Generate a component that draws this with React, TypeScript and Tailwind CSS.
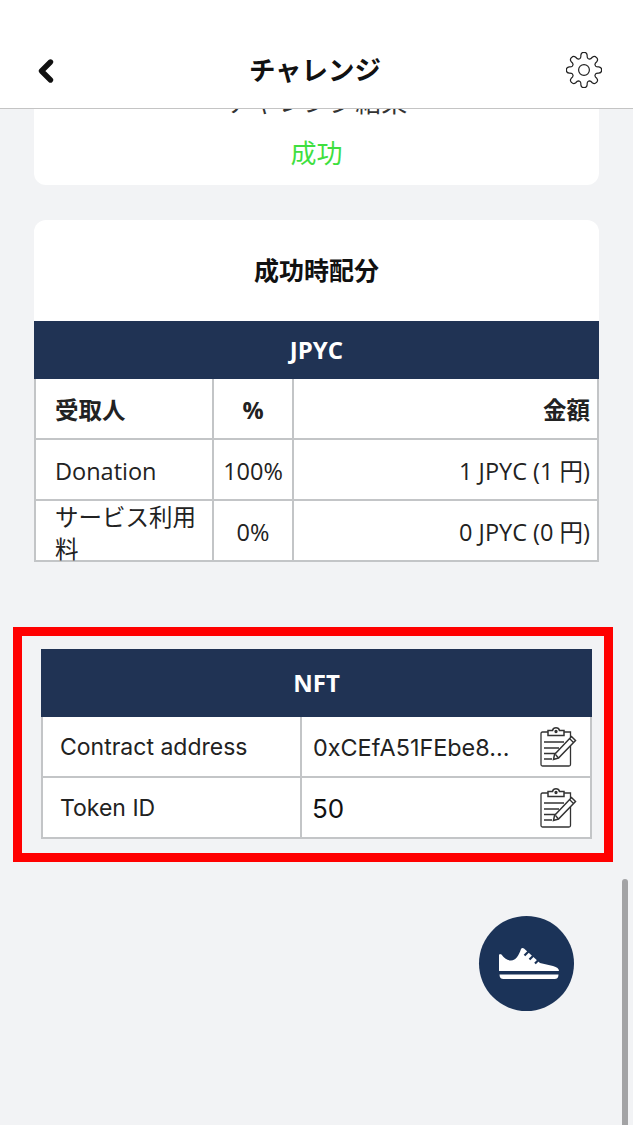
import { ChevronLeft } from 'lucide-react';
import type { JSX } from 'react';

const SANS = "font-['Open_Sans','Noto_Sans_CJK_JP',sans-serif]";

// 8-tooth cog outline, worked out once at render
function cogPath(): string {
  const pt = (r: number, deg: number): string => {
    const a = (deg * Math.PI) / 180;
    return `${(18 + r * Math.cos(a)).toFixed(2)} ${(18 + r * Math.sin(a)).toFixed(2)}`;
  };
  let d = '';
  for (let i = 0; i < 8; i++) {
    const c = i * 45 - 90;
    d += `${i === 0 ? 'M' : 'L'}${pt(12.2, c - 22.5 + 4)} `;
    d += `Q${pt(13, c - 13)} ${pt(15.2, c - 12)} `;
    d += `Q${pt(18, c - 9)} ${pt(17.6, c)} `;
    d += `Q${pt(18, c + 9)} ${pt(15.2, c + 12)} `;
    d += `Q${pt(13, c + 13)} ${pt(12.2, c + 22.5 - 4)} `;
  }
  return d + 'Z';
}

function Cog(): JSX.Element {
  return (
    <svg width="36" height="36" viewBox="0 0 36 36" fill="none" stroke="#222" strokeWidth="1.2" className="mb-[2px]">
      <path d={cogPath()} strokeLinejoin="round" />
      <circle cx="18" cy="18" r="5.4" />
    </svg>
  );
}

function ClipboardPen(): JSX.Element {
  return (
    <svg width="38" height="40" viewBox="0 0 38 40" fill="none" stroke="#333" strokeWidth="1.3" className="shrink-0">
      <path d="M9 5H3.5C2.5 5 2 5.6 2 6.5V37.5C2 38.5 2.5 39 3.5 39H30C31 39 31.5 38.5 31.5 37.5V19" />
      <path d="M25 5H31.5V10" />
      <path d="M9 8.5V3.5H13.5C14 1.5 15.5 0.8 17 0.8C18.5 0.8 20 1.5 20.5 3.5H25V8.5Z" strokeWidth="1.5" />
      <circle cx="17" cy="4.5" r="1" fill="#333" />
      <path d="M5 15H25M5 21H20M5 26.5H17M5 32H13" strokeWidth="1.5" />
      <path d="M15.5 27.5L32.5 9.5L36.5 13.5L19.5 31L14.5 32.5Z" strokeWidth="1.5" />
      <path d="M30.5 11.5L34.5 15.5M16.5 27.5L19.5 31" />
    </svg>
  );
}

function Shoe(): JSX.Element {
  return (
    <svg width="60" height="31" viewBox="0 0 60 31">
      <path
        fill="#fff"
        d="M0 7.5Q0 5 2.5 6.5C5 10 8 12.5 12 12.5C17 12.5 20 7 22 1Q23 -0.5 25 0.5L41 15L54 18Q60 19.5 60 23H0Z"
      />
      <path stroke="#1b3358" strokeWidth="2.2" fill="none" d="M25.5 7.5L29.5 3.5M30.5 11.5L34.5 7.5M36 15.5L40 11.5" />
      <path fill="#fff" d="M0.5 26.5H59.5Q59.5 31 55.5 31H4.5Q0.5 31 0.5 26.5Z" />
    </svg>
  );
}

const cell = 'border-2 border-[#c3c5c7] pt-[4px] text-[23.5px] text-[#222]';
const nftCell = 'border-2 border-[#c3c5c7] text-[#222]';

export default function App(): JSX.Element {
  return (
    <div className={`relative flex h-[1125px] w-[633px] flex-col overflow-hidden bg-[#f2f3f5] ${SANS}`}>
      <header className="relative z-10 flex h-[109px] shrink-0 items-end justify-between border-b border-[#c4c4c4] bg-white pb-[18px] pl-[28px] pr-[31px]">
        <ChevronLeft size={36} strokeWidth={3.6} className="mb-[1px] text-[#111]" />
        <h1 className="text-[26.5px] font-bold leading-[40px] text-[#111]">チャレンジ</h1>
        <Cog />
      </header>

      <main className="flex flex-col items-start pl-[34px]">
        <section className="-mt-[22px] flex h-[98px] w-[565px] flex-col items-center rounded-b-xl bg-white">
          <p className="text-[26px] leading-[30px] text-[#333]">チャレンジ結果</p>
          <p className="mt-[18px] text-[26px] leading-[36px] text-[#3fdf3f]">成功</p>
        </section>

        <section className="mt-[35px] w-[565px] overflow-hidden rounded-t-xl bg-white">
          <h2 className="h-[101px] pt-[30px] text-center text-[25px] font-bold leading-[40px] text-[#111]">成功時配分</h2>
          <table className="w-[565px] table-fixed border-collapse bg-white">
            <colgroup>
              <col className="w-[178px]" />
              <col className="w-[80px]" />
              <col />
            </colgroup>
            <thead>
              <tr className="h-[56px] bg-[#203354]">
                <th colSpan={3} className="border-2 border-[#203354] text-center text-[24px] font-bold text-white">JPYC</th>
              </tr>
            </thead>
            <tbody>
              <tr className="h-[61px]">
                <td className={`${cell} pl-[19px] font-bold text-[#111]`}>受取人</td>
                <td className={`${cell} text-center font-bold text-[#111]`}>%</td>
                <td className={`${cell} pr-[7px] text-right font-bold text-[#111]`}>金額</td>
              </tr>
              <tr className="h-[61px]">
                <td className={`${cell} pl-[19px]`}>Donation</td>
                <td className={`${cell} text-center`}>100%</td>
                <td className={`${cell} pr-[7px] text-right`}>1 JPYC (1 円)</td>
              </tr>
              <tr className="h-[61px]">
                <td className="border-2 border-[#c3c5c7] pl-[19px] pr-[14px] text-[23.5px] leading-[32px] text-[#222]">
                  <div className="-mt-[1px] h-[59px]">サービス利用料</div>
                </td>
                <td className={`${cell} text-center`}>0%</td>
                <td className={`${cell} pr-[7px] text-right`}>0 JPYC (0 円)</td>
              </tr>
            </tbody>
          </table>
        </section>

        <section className="-ml-[21px] mt-[65px] w-[600px] border-[9px] border-[#ff0000] px-[19px] pb-[14px] pt-[13px]">
          <table className="w-[551px] table-fixed border-collapse">
            <colgroup>
              <col className="w-[259px]" />
              <col />
            </colgroup>
            <thead>
              <tr className="h-[66px] bg-[#203354]">
                <th colSpan={2} className="border-2 border-[#203354] text-center text-[24px] font-bold text-white">NFT</th>
              </tr>
            </thead>
            <tbody className="bg-white">
              <tr className="h-[61px]">
                <td className={`${nftCell} pl-[17px] pt-[2px] font-['Inter',sans-serif] text-[23px]`}>Contract address</td>
                <td className={`${nftCell} pl-[11px] pr-[13px]`}>
                  <div className="flex items-center justify-between">
                    <span className="pt-[2px] font-['Inter',sans-serif] text-[23.4px]">0xCEfA51FEbe8...</span>
                    <ClipboardPen />
                  </div>
                </td>
              </tr>
              <tr className="h-[61px]">
                <td className={`${nftCell} pl-[17px] pt-[2px] font-['Inter',sans-serif] text-[23px]`}>Token ID</td>
                <td className={`${nftCell} pl-[10px] pr-[13px]`}>
                  <div className="flex items-center justify-between">
                    <span className="pt-[2px] font-['Inter',sans-serif] text-[26px] text-[#111]">50</span>
                    <ClipboardPen />
                  </div>
                </td>
              </tr>
            </tbody>
          </table>
        </section>
      </main>

      <div className="absolute bottom-0 right-[5px] top-[879px] w-[6px] rounded-t-full bg-[#a3a3a5]" />
      <button type="button" className="absolute left-[479px] top-[916px] flex h-[95px] w-[95px] items-center justify-center rounded-full bg-[#1b3358] pl-[5px]">
        <Shoe />
      </button>
    </div>
  );
}
